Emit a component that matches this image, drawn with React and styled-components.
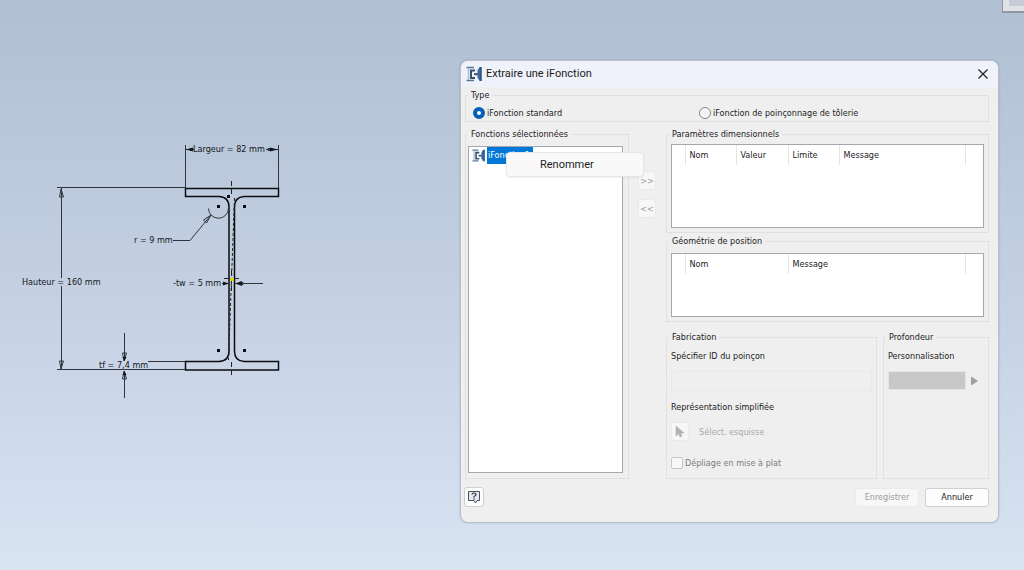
import React, { useState } from 'react'
import styled, { createGlobalStyle } from 'styled-components'

const GlobalStyle = createGlobalStyle`
  * {
    box-sizing: border-box;
  }
  body {
    margin: 0;
    font-family: "DejaVu Sans Condensed", "Noto Sans", sans-serif;
    font-size: 9px;
    line-height: 12px;
    color: #1c1c1c;
  }
  button, input {
    font: inherit;
    color: inherit;
  }
`

const Workspace = styled.main`
  position: relative;
  display: grid;
  grid-template-columns: 460px minmax(0, 1fr);
  align-items: start;
  min-height: 100vh;
  padding-right: 25px;
  overflow: hidden;
  background: linear-gradient(#b0bfd3, #c4d0e2 50%, #d8e4f2);
`

const Sketch = styled.svg`
  display: block;
  width: 460px;
  height: 570px;
  font-family: "DejaVu Sans Condensed", "Noto Sans", sans-serif;
  font-size: 9px;
`

const ViewCube = styled.div`
  position: absolute;
  top: 0;
  right: 0;
  width: 22px;
  height: 13px;
  padding-left: 6px;
  background: #dfe2e6;
  border: solid #9098a3;
  border-width: 0 0 2px 1px;

  &::before {
    content: '';
    display: block;
    height: 6px;
    background: #c5ccd8;
  }
`

const Dialog = styled.form`
  margin-top: 60px;
  background: #efefef;
  border: 1px solid #b9c0ca;
  border-radius: 8px;
  box-shadow: 0 0 2px rgba(60, 80, 110, 0.3);
`

const TitleBar = styled.header`
  display: flex;
  align-items: center;
  gap: 4px;
  height: 26px;
  padding: 0 9px 0 5px;
  background: #eff2fa;
  border-radius: 7px 7px 0 0;
`

const Title = styled.h1`
  flex: 1;
  margin: 0;
  font-family: Roboto, sans-serif;
  font-size: 11px;
  font-weight: 400;
`

const CloseButton = styled.button`
  display: flex;
  padding: 0;
  border: 0;
  background: none;
`

const Content = styled.div`
  display: flex;
  flex-direction: column;
  gap: 6px;
  padding: 2px 9px 0 4px;
`

const Group = styled.fieldset`
  min-width: 0;
  margin: 0;
  padding: 0;
  border: 1px solid #e0e0e0;
`

const Legend = styled.legend`
  margin-left: 2px;
  padding: 0 3px;
`

const GroupBody = styled.div`
  padding: ${props => props.$pad};
`

const TypeOptions = styled.div`
  display: grid;
  grid-template-columns: 226px 1fr;
  align-items: center;
  height: 20px;
  padding: 3px 0 0 7px;
`

const Choice = styled.label`
  display: flex;
  align-items: center;
  gap: 2px;
  color: ${props => props.$disabled ? '#7c7c7c' : 'inherit'};
`

const Radio = styled.input`
  appearance: none;
  width: 12px;
  height: 12px;
  margin: 0;
  border: 1px solid #858585;
  border-radius: 50%;
  background: #f5f5f5;

  &:checked {
    border: 4px solid #0560b6;
    background: #fff;
  }
`

const Checkbox = styled.input`
  appearance: none;
  width: 12px;
  height: 12px;
  margin: 0;
  border: 1px solid #c8c8c8;
  border-radius: 2px;
  background: #f8f8f8;
`

const Columns = styled.div`
  display: grid;
  grid-template-columns: 164px 19px minmax(0, 1fr);
  column-gap: 9px;
`

const FeatureList = styled.ul`
  position: relative;
  height: 327px;
  margin: 0;
  padding: 0;
  list-style: none;
  background: #fff;
  border: 1px solid #a4a7b0;
`

const Feature = styled.li`
  display: flex;
  align-items: center;
  gap: 2px;
  padding-left: 3px;
`

const FeatureName = styled.span`
  width: 46px;
  overflow: hidden;
  padding-left: 1px;
  line-height: 17px;
  color: #fff;
  background: #0078d7;
`

const ContextMenu = styled.menu`
  position: absolute;
  top: 5px;
  left: 37px;
  z-index: 1;
  width: 138px;
  margin: 0;
  padding: 0;
  background: #f9f9f9;
  border: 1px solid #e6e6e6;
  border-radius: 4px;
  box-shadow: 0 1px 2px rgba(0, 0, 0, 0.06);
`

const MenuItem = styled.button`
  display: block;
  width: 100%;
  height: 23px;
  padding: 0 0 0 33px;
  border: 0;
  background: none;
  font-family: Roboto, sans-serif;
  font-size: 11px;
  text-align: left;
`

const Transfer = styled.div`
  display: flex;
  flex-direction: column;
  gap: 9px;
  padding-top: 43px;
`

const Button = styled.button`
  display: flex;
  align-items: center;
  justify-content: center;
  width: ${props => props.$width || '18px'};
  height: ${props => props.$height || '19px'};
  padding: 0;
  border: 1px solid #cfcfcf;
  border-radius: 3px;
  background: #fdfdfd;

  &:disabled {
    color: #9b9b9b;
    background: #f7f7f7;
    border-color: #eaeaea;
  }
`

const Panels = styled.div`
  display: flex;
  flex-direction: column;
  gap: 2px;
`

const BottomPanels = styled.div`
  display: grid;
  grid-template-columns: minmax(0, 1fr) 106px;
  gap: 6px;
  margin-top: 7px;
`

const TableBox = styled.div`
  height: ${props => props.$height};
  background: #fff;
  border: 1px solid #a4a7b0;
`

const Table = styled.table`
  width: 100%;
  table-layout: fixed;
  border-collapse: collapse;
`

const HeadCell = styled.th`
  width: ${props => props.$width || 'auto'};
  height: 20px;
  padding: 0 4px;
  border-right: ${props => props.$last ? '0' : '1px solid #e5e5e5'};
  font-weight: 400;
  text-align: left;
`

const Field = styled.div`
  display: flex;
  flex-direction: column;
  gap: 9px;
`

const FabricationBody = styled.div`
  display: flex;
  flex-direction: column;
  height: 135px;
  padding: 7px 4px 0;
`

const PunchInput = styled.input`
  width: 100%;
  height: 20px;
  border: 1px solid #e8e8e8;
  border-radius: 2px;
  background: #efefef;
`

const Caption = styled.div`
  margin-top: 10px;
`

const SketchPick = styled.div`
  display: flex;
  align-items: center;
  gap: 10px;
  margin: 9px 0 16px;
  color: #a8a8a8;
`

const DepthRow = styled.div`
  display: flex;
  align-items: center;
`

const DepthInput = styled.input`
  width: 78px;
  height: 19px;
  border: 1px solid #e4e4e4;
  background: #c8c8c8;
`

const ArrowButton = styled.button`
  display: flex;
  padding: 5px;
  border: 0;
  background: none;
`

const Footer = styled.footer`
  display: flex;
  align-items: center;
  gap: 6px;
  padding: 8px 9px 15px 3px;
`

const Spacer = styled.span`
  flex: 1;
`

const FeatureIcon = ({ size }) => (
  <svg width={size} height={size} viewBox="0 0 16 16" aria-hidden="true">
    <path d="M.5 1.500H8M.5 14.500H8" stroke="#55789c" strokeWidth="1.500" />
    <path d="M2.500 2v12" stroke="#a9bacd" strokeWidth="1.500" />
    <path d="M9 4.500H5v7.500h4" fill="none" stroke="#36516f" strokeWidth="2" />
    <path d="M8 8.200h4" stroke="#36516f" strokeWidth="2" />
    <path d="M15.500 1v14h-2l-2-3.500v-7L13.500 1z" fill="#3b6799" />
    <path d="M15 1v14" stroke="#234774" />
  </svg>
)

const columnsDim = [
  { label: '', width: '13px' },
  { label: 'Nom', width: '51px' },
  { label: 'Valeur', width: '52px' },
  { label: 'Limite', width: '51px' },
  { label: 'Message' },
  { label: '', width: '18px' },
]

const columnsGeo = [
  { label: '', width: '13px' },
  { label: 'Nom', width: '103px' },
  { label: 'Message' },
  { label: '', width: '18px' },
]

const Grid = ({ columns, height, label }) => (
  <TableBox $height={height}>
    <Table aria-label={label}>
      <thead>
        <tr>
          {columns.map((column, i) => (
            <HeadCell key={i} $width={column.width} $last={i === columns.length - 1}>{column.label}</HeadCell>
          ))}
        </tr>
      </thead>
    </Table>
  </TableBox>
)

const BeamSketch = () => (
  <Sketch viewBox="0 0 460 570">
    {/* profile */}
    <g fill="none" stroke="#0a0c10" strokeWidth="1.500">
      <path d="M185.500 188.500H278.500V196.500H244Q234.500 197 234.500 207V351Q234.500 361 244 361.500H278.500V370H185.500V361.500H219Q229 361 229 351V207Q229 197 219 196.500H185.500Z" />
    </g>

    {/* axis and construction lines */}
    <g fill="none" stroke="#20242b">
      <path d="M231.500 181V196M231.500 270V292M231.500 362V377" strokeDasharray="5 3" />
      <path d="M234.500 198L228.500 360" strokeDasharray="3 2" />
      <path d="M224 278.500H239" />
    </g>
    <g fill="#0a0c10">
      <rect x="217" y="205" width="3" height="3" />
      <rect x="243" y="205" width="3" height="3" />
      <rect x="227" y="195" width="3" height="3" />
      <rect x="217" y="349" width="3" height="3" />
      <rect x="243" y="349" width="3" height="3" />
    </g>
    <rect x="230" y="278" width="4" height="3" fill="#d8d800" />

    {/* dimension lines */}
    <g fill="none" stroke="#30353d">
      <path d="M185.500 145V188M278.500 145V188M185 149.500H194M266 149.500H278" />
      <path d="M57 187.500H185M57 369.500H185M61.500 188V278M61.500 286V369" />
      <path d="M124.500 333V360M124.500 371V398M148 361.500H185" />
      <path d="M173 240.500H190L211 215M208.500 208.500A10 10 0 0 0 228.500 208" />
      <path d="M222 283.500H228M235 283.500H263" />
      <path d="M59.500 197L61 189L63.500 197ZM59.500 361L61 369L63.500 361Z" />
      <path d="M122.500 353L124 361L126.500 353ZM122.500 379L124 371L126.500 379Z" />
      <path d="M211 215L203.500 220L206.500 223Z" />
      <path d="M190 148.500h3v2h-3M268 148.500h4v2h-4zM240 282.500h3v2h-3z" />
    </g>
    <g fill="#14171c">
      <path d="M186 149.500l7-2v4zM278 149.500l-8-2v4z" />
      <path d="M229 283.500l-6-2v4zM235 283.500l7-2.500v5z" />
      <path d="M124.500 361l-2-4h4zM124.500 371l-2 4h4z" />
    </g>

    <g fill="#14171c">
      <text x="193" y="152">Largeur = 82 mm</text>
      <text x="134" y="243">r = 9 mm</text>
      <text x="22" y="285">Hauteur = 160 mm</text>
      <text x="173" y="286">-tw = 5 mm</text>
      <text x="99" y="368">tf = 7,4 mm</text>
    </g>
  </Sketch>
)

const App = () => {
  const [type, setType] = useState('standard')

  return (
    <Workspace>
      <GlobalStyle />
      <BeamSketch />
      <ViewCube />

      <Dialog onSubmit={(event) => event.preventDefault()}>
        <TitleBar>
          <FeatureIcon size={16} />
          <Title>Extraire une iFonction</Title>
          <CloseButton type="button" aria-label="Fermer">
            <svg width="12" height="12" viewBox="0 0 12 12">
              <path d="M1.500 1.500l9 9M10.500 1.500l-9 9" stroke="#222" strokeWidth="1.200" />
            </svg>
          </CloseButton>
        </TitleBar>

        <Content>
          <Group>
            <Legend>Type</Legend>
            <TypeOptions>
              <Choice>
                <Radio type="radio" name="type" checked={type === 'standard'} onChange={() => setType('standard')} />
                iFonction standard
              </Choice>
              <Choice>
                <Radio type="radio" name="type" checked={type === 'tolerie'} onChange={() => setType('tolerie')} />
                iFonction de poinçonnage de tôlerie
              </Choice>
            </TypeOptions>
          </Group>

          <Columns>
            <Group>
              <Legend>Fonctions sélectionnées</Legend>
              <GroupBody $pad="6px 5px 0 2px">
                <FeatureList>
                  <Feature>
                    <FeatureIcon size={13} />
                    <FeatureName>iFonction1</FeatureName>
                  </Feature>
                  <ContextMenu>
                    <MenuItem type="button">Renommer</MenuItem>
                  </ContextMenu>
                </FeatureList>
              </GroupBody>
            </Group>

            <Transfer>
              <Button type="button" disabled>&gt;&gt;</Button>
              <Button type="button" disabled>&lt;&lt;</Button>
            </Transfer>

            <Panels>
              <Group>
                <Legend>Paramètres dimensionnels</Legend>
                <GroupBody $pad="4px">
                  <Grid columns={columnsDim} height="84px" label="Paramètres dimensionnels" />
                </GroupBody>
              </Group>
              <Group>
                <Legend>Géométrie de position</Legend>
                <GroupBody $pad="6px 4px 4px">
                  <Grid columns={columnsGeo} height="64px" label="Géométrie de position" />
                </GroupBody>
              </Group>

              <BottomPanels>
                <Group>
                  <Legend>Fabrication</Legend>
                  <FabricationBody>
                    <Field>
                      <label htmlFor="punch">Spécifier ID du poinçon</label>
                      <PunchInput id="punch" disabled />
                    </Field>
                    <Caption>Représentation simplifiée</Caption>
                    <SketchPick>
                      <Button type="button" disabled aria-label="Sélect. esquisse">
                        <svg width="12" height="14" viewBox="0 0 12 14">
                          <path d="M2 1v10l2.500-2.500L6 12l2-1-1.500-3H10z" fill="#b4b4b4" stroke="#a0a0a0" strokeWidth=".5" />
                        </svg>
                      </Button>
                      Sélect. esquisse
                    </SketchPick>
                    <Choice $disabled>
                      <Checkbox type="checkbox" disabled />
                      Dépliage en mise à plat
                    </Choice>
                  </FabricationBody>
                </Group>

                <Group>
                  <Legend>Profondeur</Legend>
                  <GroupBody $pad="7px 4px 0">
                    <Field>
                      <label htmlFor="depth">Personnalisation</label>
                      <DepthRow>
                        <DepthInput id="depth" disabled />
                        <ArrowButton type="button" disabled aria-label="Options">
                          <svg width="7" height="8" viewBox="0 0 7 8">
                            <path d="M0 0h1l6 4-6 4H0z" fill="#a0a0a0" />
                          </svg>
                        </ArrowButton>
                      </DepthRow>
                    </Field>
                  </GroupBody>
                </Group>
              </BottomPanels>
            </Panels>
          </Columns>
        </Content>

        <Footer>
          <Button type="button" $width="20px" $height="20px" aria-label="Aide">
            <svg width="14" height="14" viewBox="0 0 14 14">
              <path d="M1.500 1.500h11v9H10L8.500 13 7 10.500H1.500z" fill="#e6eaf0" stroke="#4a5260" />
              <path d="M5 4.500Q5 3 7 3t2 1.500Q9 5.500 7 6.500V7.500M7 8.300v1.200" fill="none" stroke="#2b313b" strokeWidth="1.200" />
            </svg>
          </Button>
          <Spacer />
          <Button type="submit" $width="64px" disabled>Enregistrer</Button>
          <Button type="button" $width="64px">Annuler</Button>
        </Footer>
      </Dialog>
    </Workspace>
  )
}

export default App
